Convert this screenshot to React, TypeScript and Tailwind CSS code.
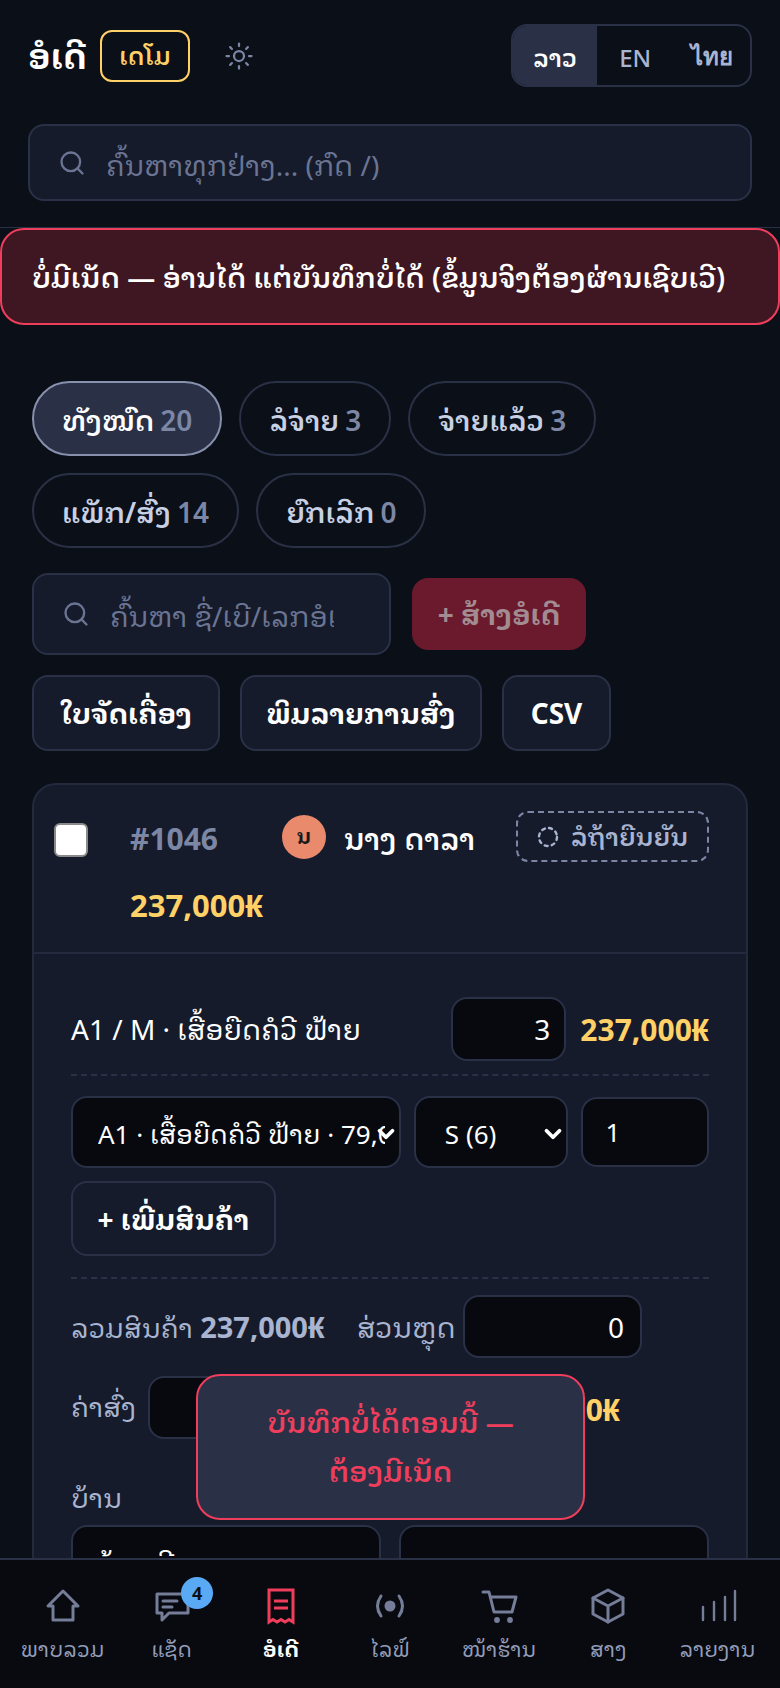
import { Search, Sun, ChevronDown } from 'lucide-react';

const chips = [
  { label: 'ທັງໝົດ', count: 20, active: true },
  { label: 'ລໍຈ່າຍ', count: 3 },
  { label: 'ຈ່າຍແລ້ວ', count: 3 },
  { label: 'ແພັກ/ສົ່ງ', count: 14 },
  { label: 'ຍົກເລີກ', count: 0 },
];

const nav = [
  { label: 'ພາບລວມ', icon: 'home' },
  { label: 'ແຊັດ', icon: 'chat', badge: 4 },
  { label: 'ອໍເດີ', icon: 'receipt', active: true },
  { label: 'ໄລຟ໌', icon: 'live' },
  { label: 'ໜ້າຮ້ານ', icon: 'cart' },
  { label: 'ສາງ', icon: 'box' },
  { label: 'ລາຍງານ', icon: 'bars' },
];

function NavIcon({ name }: { name: string }) {
  const p = { width: 36, height: 36, viewBox: '0 0 36 36', fill: 'none', stroke: 'currentColor', strokeWidth: 3, strokeLinecap: 'round' as const, strokeLinejoin: 'round' as const, className: 'overflow-visible' };
  if (name === 'home') return <svg {...p}><path d="M18 3 3 18h5v14h20V18h5z" /></svg>;
  if (name === 'chat') return <svg {...p}><path d="M3 6h31v19H15l-7 7v-7H3z" /><path d="M9 13h14M9 19h9" /></svg>;
  if (name === 'receipt') return <svg {...p} strokeLinecap="butt" strokeLinejoin="miter"><path d="M6 2h24v32l-4-2.5-4 2.5-4-2.5-4 2.5-4-2.5-4 2.5z" /><path d="M11 13h14M11 20h14" /></svg>;
  if (name === 'live') return <svg {...p}><circle cx="18" cy="18" r="4" fill="currentColor" /><path d="M9 8Q2 18 9 28M27 8q7 10 0 20" /></svg>;
  if (name === 'cart') return <svg {...p}><path d="M2 4h6l5 20h18l4-15H10" /><circle cx="16" cy="32" r="1.4" fill="currentColor" /><circle cx="29" cy="32" r="1.4" fill="currentColor" /></svg>;
  if (name === 'box') return <svg {...p}><path d="M18 2 33 10v16l-15 8-15-8V10z" /><path d="m3 10 15 8 15-8M18 18v16" /></svg>;
  return <svg {...p} strokeWidth={2.4}><path d="M4 32V19M15 32V14M26 32V9M36 32V3" /></svg>;
}

export default function App() {
  return (
    <div className="relative h-[1688px] overflow-hidden bg-[#0b0f17] text-white font-['Noto_Sans','Noto_Sans_Lao_Looped',sans-serif]">
      <header className="px-7 pt-6 h-[228px] border-b border-[#2a3147]">
        <div className="flex items-center justify-between">
          <div className="flex items-center">
            <span className="w-[72px] text-[34px] font-bold leading-none">ອໍເດີ</span>
            <span className="w-[90px] h-[52px] flex items-center justify-center rounded-xl border-2 border-[#ffd166] text-[#ffd166] text-[24px] font-semibold">ເດໂມ</span>
            <Sun className="ml-[34px] text-[#7b86a5]" size={30} strokeWidth={1.8} />
          </div>
          <div className="flex w-[241px] h-[63px] rounded-2xl border-2 border-[#2a3147] overflow-hidden text-[24px] font-semibold">
            <span className="w-[84px] pt-1 flex items-center justify-center bg-[#2a3147]">ລາວ</span>
            <span className="flex-1 pt-1 flex items-center justify-center text-[#a9b4d0] font-medium">EN</span>
            <span className="flex-1 flex items-center justify-center text-[#a9b4d0]">ไทย</span>
          </div>
        </div>
        <div className="mt-[37px] h-[77px] flex items-center rounded-2xl border-2 border-[#2a3147] bg-[#151b2b] px-7 text-[#6b7593] text-[28px]">
          <Search size={28} />
          <span className="ml-5 pt-1">ຄົ້ນຫາທຸກຢ່າງ... (ກົດ /)</span>
        </div>
      </header>

      <div className="h-[97px] flex items-center px-[30px] rounded-3xl border-2 border-[#ef3e5c] bg-[#3f1722] text-[28px] font-semibold whitespace-nowrap">
        ບໍ່ມີເນັດ — ອ່ານໄດ້ ແຕ່ບັນທຶກບໍ່ໄດ້ (ຂໍ້ມູນຈິງຕ້ອງຜ່ານເຊີບເວີ)
      </div>

      <main className="px-8 pt-[56px]">
        <div className="flex flex-wrap gap-[17px]">
          {chips.map((c) => (
            <span key={c.label} className={`h-[75px] px-7 pt-0.5 flex items-center gap-[6px] rounded-full border-2 text-[28px] font-semibold ${c.active ? 'bg-[#2a3147] border-[#8791ad] text-white' : 'border-[#2a3147] text-[#c8d0e4]'}`}>
              {c.label} <span className="text-[#7c87a6]">{c.count}</span>
            </span>
          ))}
        </div>

        <div className="mt-[25px] flex items-center gap-[21px]">
          <div className="w-[359px] h-[82px] flex items-center rounded-2xl border-2 border-[#2a3147] bg-[#151b2b] pl-7 text-[#6b7593] text-[28px] overflow-hidden">
            <Search size={28} className="shrink-0" />
            <span className="ml-5 pt-1 w-[224px] overflow-hidden whitespace-nowrap">ຄົ້ນຫາ ຊື່/ເບີ/ເລກອໍເດີ</span>
          </div>
          <span className="w-[174px] h-[72px] flex items-center justify-center rounded-2xl bg-[#6a1a2c] text-[#a38b92] text-[28px] font-bold">+ ສ້າງອໍເດີ</span>
        </div>

        <div className="mt-5 flex gap-5 text-[28px] font-bold">
          <span className="w-[188px] h-[76px] flex items-center justify-center rounded-2xl border-2 border-[#2a3147] bg-[#151b2b]">ໃບຈັດເຄື່ອງ</span>
          <span className="w-[242px] h-[76px] flex items-center justify-center rounded-2xl border-2 border-[#2a3147] bg-[#151b2b]">ພິມລາຍການສົ່ງ</span>
          <span className="w-[109px] h-[76px] flex items-center justify-center rounded-2xl border-2 border-[#2a3147] bg-[#151b2b]">CSV</span>
        </div>

        <section className="mt-8 w-[716px] rounded-t-3xl border-2 border-[#232a3e] bg-[#151b2b]">
          <div className="h-[169px] border-b-2 border-[#232a3e] pl-5 pt-[26px]">
            <div className="flex items-center h-[51px]">
              <span className="mt-[6px] w-[34px] h-[34px] rounded-md bg-white border-2 border-[#8a8a8a]" />
              <span className="ml-[42px] mt-1 w-[152px] text-[#7c87a6] text-[30px] font-bold">#1046</span>
              <span className="w-11 h-11 rounded-full bg-[#e98a6d] text-[#1a1a1a] text-xl font-bold flex items-center justify-center">ນ</span>
              <span className="ml-[18px] mt-1 w-[172px] text-[29px] font-semibold whitespace-nowrap">ນາງ ດາລາ</span>
              <span className="w-[193px] h-[51px] flex items-center justify-center gap-3 rounded-xl border-2 border-dashed border-[#7c87a6] text-[#a9b4d0] text-[25px] font-semibold whitespace-nowrap">
                <svg width="22" height="22" viewBox="0 0 22 22" fill="none" stroke="currentColor" strokeWidth="2.4" strokeDasharray="3 4.2" strokeLinecap="round"><circle cx="11" cy="11" r="9" /></svg>
                ລໍຖ້າຍືນຍັນ
              </span>
            </div>
            <div className="ml-[76px] mt-[23px] h-10 flex items-center text-[#ffd166] text-[31px] font-bold">237,000₭</div>
          </div>

          <div className="px-[37px] pt-[43px]">
            <div className="flex items-center">
              <span className="text-[28px] flex-1 whitespace-nowrap">A1 / M · ເສື້ອຍືດຄໍວີ ຟ້າຍ</span>
              <span className="w-[115px] h-16 flex items-center justify-end pr-[14px] rounded-2xl border-2 border-[#2a3147] bg-[#07090f] text-[28px]">3</span>
              <span className="ml-[14px] text-[#ffd166] text-[30px] font-bold">237,000₭</span>
            </div>
            <div className="mt-[13px] border-t-2 border-dashed border-[#2a3147]" />

            <div className="mt-5 flex items-center gap-[13px]">
              <span className="relative w-[331px] h-[72px] pt-1 flex items-center pl-[25px] rounded-2xl border-2 border-[#2a3147] bg-[#07090f] text-[26px]">
                <span className="w-[287px] overflow-hidden whitespace-nowrap">A1 · ເສື້ອຍືດຄໍວີ ຟ້າຍ · 79,000₭</span>
                <ChevronDown size={26} strokeWidth={3.5} className="absolute right-0" />
              </span>
              <span className="relative w-[155px] h-[72px] pt-1 flex items-center pl-[29px] rounded-2xl border-2 border-[#2a3147] bg-[#07090f] text-[26px]">
                S (6)
                <ChevronDown size={26} strokeWidth={3.5} className="absolute right-0" />
              </span>
              <span className="w-[128px] h-[70px] flex items-center pl-[22px] rounded-2xl border-2 border-[#2a3147] bg-[#07090f] text-[26px]">1</span>
            </div>
            <span className="mt-[13px] w-[205px] h-[75px] flex items-center justify-center rounded-2xl border-2 border-[#2a3147] text-[28px] font-bold">+ ເພີ່ມສິນຄ້າ</span>
            <div className="mt-[21px] border-t-2 border-dashed border-[#2a3147]" />

            <div className="mt-4 flex items-center text-[#a9b4d0] text-[27px]">
              <span className="w-[286px] whitespace-nowrap">ລວມສິນຄ້າ <b className="text-[29px] font-bold">237,000₭</b></span>
              <span className="w-[106px] text-[28px]">ສ່ວນຫຼຸດ</span>
              <span className="w-[179px] h-[63px] flex items-center justify-end pr-4 rounded-2xl border-2 border-[#2a3147] bg-[#07090f] text-white text-[28px]">0</span>
            </div>
            <div className="mt-[18px] flex items-center text-[#a9b4d0] text-[27px]">
              <span>ຄ່າສົ່ງ</span>
              <span className="ml-3 w-[179px] h-[63px] rounded-2xl border-2 border-[#2a3147] bg-[#07090f]" />
              <span className="ml-auto mr-[89px] mt-1 text-[#ffd166] text-[30px] font-bold">237,000₭</span>
            </div>
            <div className="mt-[39px] h-10 flex items-center text-[#a9b4d0] text-[27px]">ບ້ານ</div>
            <div className="mt-[7px] grid grid-cols-2 gap-[18px]">
              <span className="h-[76px] flex items-center pl-[23px] rounded-2xl border-2 border-[#2a3147] bg-[#07090f] text-[28px]">ບ້ານ ຊີດ ພະຍຸດ</span>
              <span className="h-[76px] rounded-2xl border-2 border-[#2a3147] bg-[#07090f]" />
            </div>
          </div>
        </section>
      </main>

      <div className="absolute left-[196px] top-[1374px] w-[389px] h-[146px] flex items-center justify-center text-center rounded-3xl border-2 border-[#ef3e5c] bg-[#2a3147] text-[#ef3e5c] text-[28px] font-semibold leading-[49px]">
        <p>ບັນທຶກບໍ່ໄດ້ຕອນນີ້ —<br />ຕ້ອງມີເນັດ</p>
      </div>

      <nav className="absolute left-0 right-0 bottom-0 h-[130px] border-t-2 border-[#2a3147] bg-[#080a10] px-2 grid grid-cols-7">
        {nav.map((n) => (
          <div key={n.label} className={`relative flex flex-col items-center pt-7 ${n.active ? 'text-white font-bold' : 'text-[#939db9]'}`}>
            <span className={n.active ? 'text-[#ef3e5c]' : 'text-[#757d98]'}><NavIcon name={n.icon} /></span>
            <span className="h-[36px] mt-[10px] text-[21px] whitespace-nowrap">{n.label}</span>
            {n.badge && <span className="absolute top-[17px] left-[64px] w-8 h-8 rounded-full bg-[#5aa9f5] text-[#0b0f17] text-lg font-bold flex items-center justify-center">{n.badge}</span>}
          </div>
        ))}
      </nav>
    </div>
  );
}
